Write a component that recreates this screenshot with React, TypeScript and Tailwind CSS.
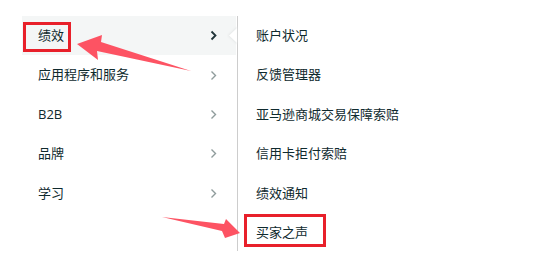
import React from "react";

const left = ["绩效", "应用程序和服务", "B2B", "品牌", "学习"];
const right = ["账户状况", "反馈管理器", "亚马逊商城交易保障索赔", "信用卡拒付索赔", "绩效通知", "买家之声"];

function Chevron({ active }: { active: boolean }) {
  return (
    <svg width="7" height="11" viewBox="0 0 7 11" className="shrink-0">
      <path
        d="M1.5 1.5 L5.5 5.5 L1.5 9.5"
        fill="none"
        stroke={active ? "#1f3338" : "#8f9c9c"}
        strokeWidth={active ? 1.8 : 1.4}
      />
    </svg>
  );
}

export default function App() {
  return (
    <div
      className="relative w-[555px] h-[262px] bg-white overflow-hidden text-[13px] text-[#0f2a2e]"
      style={{ fontFamily: '"Open Sans", "Noto Sans CJK SC", sans-serif' }}
    >
      <div className="flex pt-[16px] pl-[22px]">
        <div className="w-[214px] flex flex-col">
          {left.map((t, i) => (
            <div
              key={t}
              className={
                "h-[39.4px] flex items-center justify-between pl-[16px] pr-[19px] " +
                (i === 0 ? "bg-[#f4f6f6]" : "")
              }
            >
              <span>{t}</span>
              <Chevron active={i === 0} />
            </div>
          ))}
        </div>
        <div className="ml-px w-px h-[235px] bg-[#cdcdcd]" />
        <div className="flex flex-col pl-[18px]">
          {right.map((t) => (
            <div key={t} className="h-[39.4px] flex items-center">
              <span>{t}</span>
            </div>
          ))}
        </div>
      </div>

      {/* notch */}
      <svg className="absolute left-[224px] top-[24px]" width="14" height="24" viewBox="0 0 14 24">
        <defs>
          <filter id="sh" x="-50%" y="-50%" width="200%" height="200%">
            <feGaussianBlur stdDeviation="1.2" />
          </filter>
        </defs>
        <polygon points="4,11.5 13,3 13,20" fill="#e3e6e6" filter="url(#sh)" />
        <polygon points="5,11.5 13,4 13,19" fill="#ffffff" />
      </svg>

      {/* red boxes */}
      <div className="absolute left-[23px] top-[22px] w-[48px] h-[30px] border-[3px] border-[#e8202a]" />
      <div className="absolute left-[244px] top-[214px] w-[82px] h-[33px] border-[3px] border-[#e8202a]" />

      {/* arrows */}
      <svg className="absolute left-0 top-0" width="555" height="262" viewBox="0 0 555 262">
        <polygon
          points="77,44 102,35 101,42 191,71 97,51 98,60"
          fill="#fd5363"
        />
        <polygon
          points="162,217 224,224 226,219 240,233 225,238 222,231"
          fill="#fd5363"
        />
      </svg>
    </div>
  );
}
